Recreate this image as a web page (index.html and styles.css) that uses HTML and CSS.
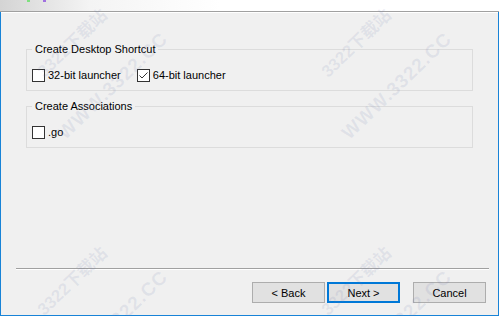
FILE: index.html
```html
<!DOCTYPE html>
<html lang="en">
<head>
  <meta charset="UTF-8">
  <title>Setup - Options</title>
  <link rel="stylesheet" href="styles.css">
</head>
<body>
  <div class="window">
    <!-- Title strip (cut off at the top) -->
    <div class="titlebar">
      <span class="icon-bit green"></span>
      <span class="icon-bit purple"></span>
    </div>

    <div class="frame">
      <div class="content">
        <fieldset class="group">
          <legend>Create Desktop Shortcut</legend>
          <div class="options">
            <label class="check"><span class="box"></span>32-bit launcher</label>
            <label class="check">
              <span class="box">
                <svg width="11" height="11" viewBox="0 0 11 11"><polyline points="1.5,5.5 4,8 9.5,2.5" fill="none" stroke="#333" stroke-width="1"/></svg>
              </span>64-bit launcher
            </label>
          </div>
        </fieldset>

        <fieldset class="group">
          <legend>Create Associations</legend>
          <div class="options">
            <label class="check"><span class="box"></span>.go</label>
          </div>
        </fieldset>
      </div>

      <div class="footer">
        <div class="separator"></div>
        <div class="buttons">
          <button class="btn">&lt; Back</button>
          <button class="btn default">Next &gt;</button>
          <button class="btn cancel">Cancel</button>
        </div>
      </div>
    </div>

    <!-- Watermark -->
    <div class="wm-tile tile-1"><span class="wm-site">3322下载站</span><span class="wm-url">WWW.3322.CC</span></div>
    <div class="wm-tile tile-2"><span class="wm-site">3322下载站</span><span class="wm-url">WWW.3322.CC</span></div>
    <div class="wm-tile tile-3"><span class="wm-site">3322下载站</span><span class="wm-url">WWW.3322.CC</span></div>
    <div class="wm-tile tile-4"><span class="wm-site">3322下载站</span><span class="wm-url">WWW.3322.CC</span></div>
  </div>
</body>
</html>
```

FILE: styles.css
```css
body {
  margin: 0;
  background-color: #f0f0f0;
  font-family: "Liberation Sans", Arial, sans-serif;
  font-size: 11px;
  color: #000;
}
.window {
  position: relative;
  width: 499px;
  height: 316px;
  display: flex;
  flex-direction: column;
  overflow: hidden;
}
.titlebar {
  position: relative;
  height: 11px;
  border-bottom: 1px solid #a0a0a0;
  background: linear-gradient(to right, #d4d4d4, #f4f4f4 90px, #fff 220px);
}
.icon-bit {
  position: absolute;
  top: 0;
  width: 3px;
  height: 2px;
}
.green {
  left: 27px;
  background: #7fe07f;
}
.purple {
  left: 43px;
  background: #a070e0;
}
.frame {
  flex: 1;
  display: flex;
  flex-direction: column;
  border: 1px solid #1883d7;
  border-top: 0;
  box-shadow: inset 0 1px #fff;
}
.content {
  flex: 1;
  padding: 30px 25px 0 25px;
}
.group {
  margin: 0 0 8px 0;
  padding: 11px 5px 7px 5px;
  border: 1px solid #dcdcdc;
  min-inline-size: 0;
}
.group legend {
  padding: 0 3px;
  line-height: 14px;
}
.options {
  display: flex;
  align-items: center;
  gap: 16px;
  height: 16px;
}
.check {
  display: flex;
  align-items: center;
  gap: 3px;
}
.box {
  box-sizing: border-box;
  width: 13px;
  height: 13px;
  border: 1px solid #333;
  background: #fff;
  display: flex;
  align-items: center;
  justify-content: center;
}
.box svg {
  display: block;
}
.footer {
  display: flex;
  flex-direction: column;
}
.separator {
  border-top: 1px solid #a0a0a0;
  border-bottom: 1px solid #fff;
  margin: 0 9px 0 15px;
}
.buttons {
  display: flex;
  justify-content: flex-end;
  gap: 2px;
  padding: 12px 12px 12px 0;
}
.btn {
  box-sizing: border-box;
  width: 73px;
  height: 21px;
  padding: 0;
  border: 1px solid #adadad;
  background: #e1e1e1;
  font-family: inherit;
  font-size: 11px;
  color: #000;
}
.btn.default {
  border: 2px solid #0078d7;
}
.btn.cancel {
  margin-left: 11px;
}
.wm-tile {
  position: absolute;
  width: 0;
  height: 0;
  pointer-events: none;
}
.tile-1 { left: 0; top: 0; }
.tile-2 { left: 284px; top: 0; }
.tile-3 { left: 0; top: 238px; }
.tile-4 { left: 284px; top: 238px; }
.wm-site,
.wm-url {
  position: absolute;
  white-space: nowrap;
  font-family: "Liberation Sans", "Noto Sans CJK SC", sans-serif;
  font-weight: bold;
  color: rgba(110, 120, 175, 0.12);
  transform: translate(-50%, -50%) rotate(-44deg);
}
.wm-site {
  left: 71px;
  top: 42px;
  font-size: 17px;
}
.wm-url {
  left: 113px;
  top: 86px;
  font-size: 19px;
  letter-spacing: 1px;
}
```
